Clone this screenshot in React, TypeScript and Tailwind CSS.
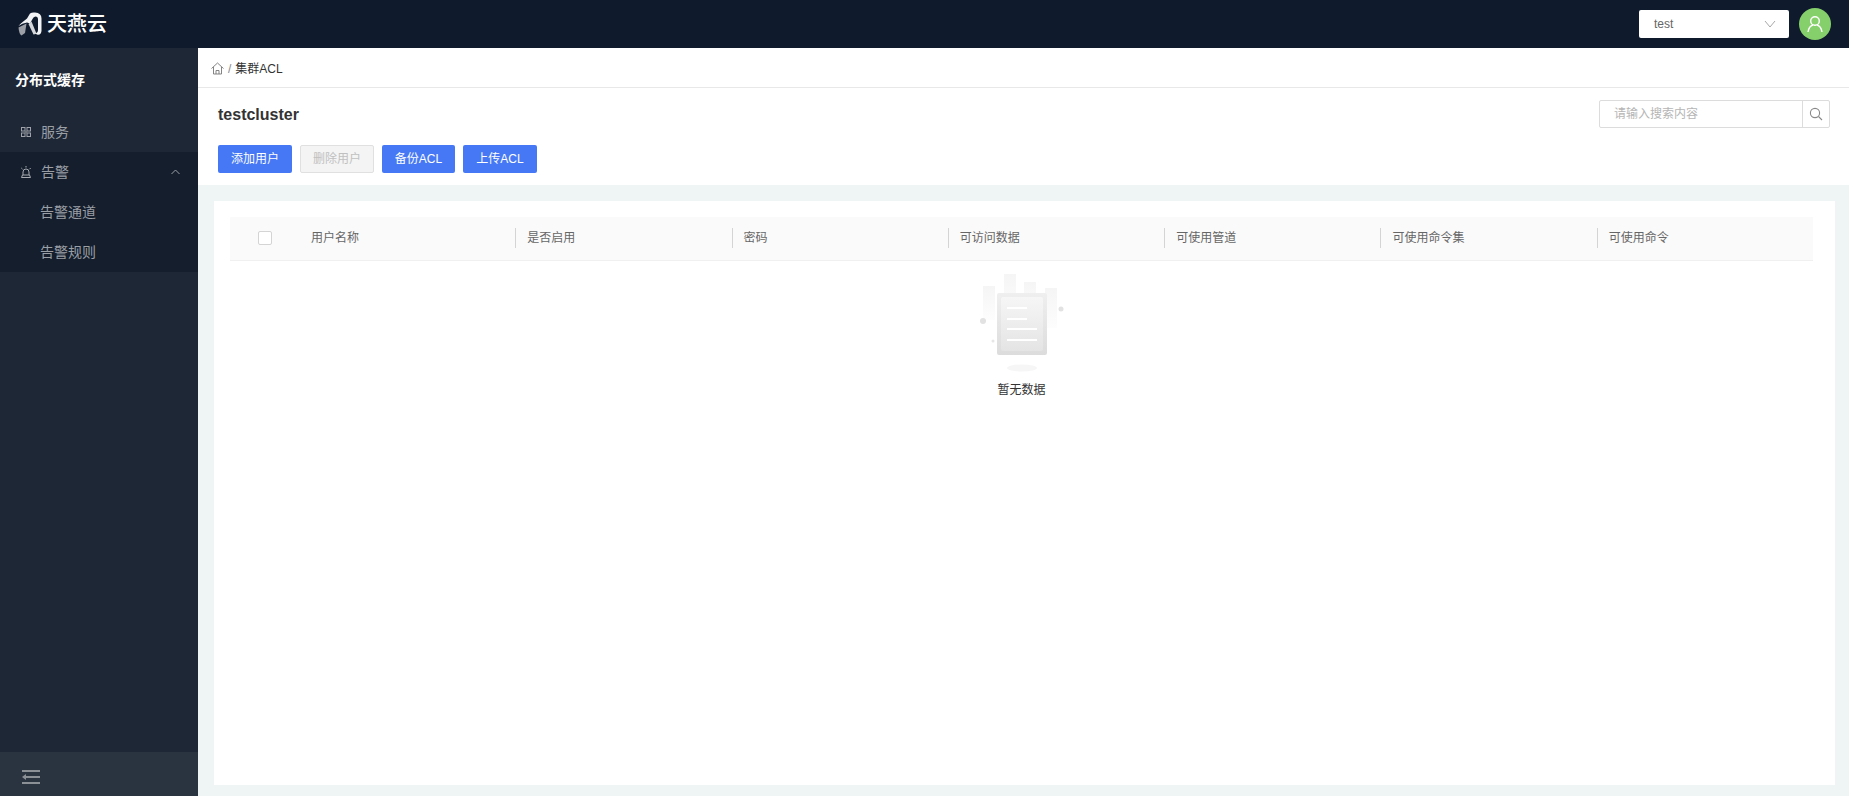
import React from "react";

const F = "font-['Liberation_Sans','Noto_Sans_CJK_SC',sans-serif]";

function Logo() {
  return (
    <div className="flex items-center gap-[5px]">
      <svg width="24" height="24" viewBox="0 0 24 24">
        <path d="M0.5 14 C3 10.5 7 8.5 9 6.5 L12 1.5 Q14 0 17 0.5 Q23.5 1 23.5 6.5 L23.5 19 Q23 23.5 19 22.5 L17 21.5 Q20 20.5 20 18 L20 7.5 Q20 4.5 17.5 4.5 Q15.5 4.5 14.5 7 L12 11.5 L9 10.5 Q4 11 0.5 14 Z" fill="#f2f3f4" />
        <path d="M0.5 15.5 L8.5 11.5 L7 21 L3.5 23.5 Q1 22 0.5 15.5 Z" fill="#9ca0a6" />
        <path d="M10.5 12 L13.5 9.5 L18.5 21.8 L15.5 22.5 Z" fill="#d4d6d9" />
      </svg>
      <span className="text-[20px] font-medium leading-none text-white">天燕云</span>
    </div>
  );
}

function ColHead({ label, divider }: { label: string; divider?: boolean }) {
  return (
    <div className="relative flex h-full flex-1 items-center pl-[12px]">
      {divider && <span className="absolute left-0 top-[11px] h-[20px] w-px bg-[#d4d4d4]" />}
      <span>{label}</span>
    </div>
  );
}

export default function App() {
  return (
    <div className={`${F} flex h-[796px] w-[1849px] flex-col overflow-hidden bg-[#eff4f5]`}>
      <header className="flex h-[48px] shrink-0 items-center justify-between bg-[#0f1b2d] pl-[18px] pr-[18px]">
        <Logo />
        <div className="flex items-center gap-[10px]">
          <div className="flex h-[28px] w-[150px] items-center justify-between rounded-[2px] bg-white pl-[15px] pr-[13px] text-[12px] text-[#666]">
            <span>test</span>
            <svg width="12" height="8" viewBox="0 0 12 8" fill="none" stroke="#a8a8a8" strokeWidth="1">
              <path d="M1 1 L6 7 L11 1" />
            </svg>
          </div>
          <div className="flex h-[32px] w-[32px] items-center justify-center rounded-full bg-[#85d06a]">
            <svg width="18" height="18" viewBox="0 0 18 18" fill="none" stroke="#fff" strokeWidth="1.4">
              <circle cx="9" cy="6" r="4.3" />
              <path d="M2 17 Q3 11 7 10 M16 17 Q15 11 11 10" />
            </svg>
          </div>
        </div>
      </header>

      <div className="flex min-h-0 flex-1">
        <aside className="flex w-[198px] shrink-0 flex-col bg-[#1e2736]">
          <div className="flex h-[64px] items-center pl-[15px] text-[14px] font-bold text-white">分布式缓存</div>
          <div className="flex h-[40px] items-center pl-[21px] text-[14px] text-[#9a9fa6]">
            <svg width="10" height="10" viewBox="0 0 10 10" fill="none" stroke="#a0a4aa" className="mr-[10px]">
              <rect x="0.5" y="0.5" width="3.5" height="3.5" />
              <rect x="6" y="0.5" width="3.5" height="3.5" />
              <rect x="0.5" y="6" width="3.5" height="3.5" />
              <rect x="6" y="6" width="3.5" height="3.5" />
              <rect x="3.5" y="3.5" width="3" height="3" fill="#6f747b" stroke="none" />
            </svg>
            <span>服务</span>
          </div>
          <div className="bg-[#141e2c] text-[14px] text-[#9a9fa6]">
            <div className="flex h-[40px] items-center justify-between pl-[21px] pr-[18px]">
              <div className="flex items-center">
                <svg width="10" height="12" viewBox="0 0 10 12" fill="none" stroke="#a8acb2" className="mr-[10px]">
                  <path d="M2 9 V6 Q2 3 5 3 Q8 3 8 6 V9" />
                  <path d="M0.5 11.5 H9.5 L8.5 9 H1.5 Z M5 0 V1.5 M0.3 2 L1.5 3.2 M9.7 2 L8.5 3.2" />
                </svg>
                <span>告警</span>
              </div>
              <svg width="9" height="6" viewBox="0 0 9 6" fill="none" stroke="#9a9fa6">
                <path d="M0.5 5 L4.5 1 L8.5 5" />
              </svg>
            </div>
            <div className="flex h-[40px] items-center pl-[40px]">告警通道</div>
            <div className="flex h-[40px] items-center pl-[40px]">告警规则</div>
          </div>
          <div className="mt-auto flex h-[44px] items-center bg-[#2a3441] pl-[22px] pt-[6px]">
            <svg width="18" height="14" viewBox="0 0 18 14" fill="#8b8f96">
              <rect x="0" y="0" width="18" height="2" />
              <rect x="4" y="6" width="14" height="2" />
              <rect x="0" y="12" width="18" height="2" />
              <path d="M0 7 L4 4 V10 Z" />
            </svg>
          </div>
        </aside>

        <main className="flex min-w-0 flex-1 flex-col">
          <div className="flex h-[40px] items-center border-b border-[#e8e8e8] bg-white pl-[13px] pt-[2px] text-[12px] text-[#333]">
            <svg width="13" height="13" viewBox="0 0 13 13" fill="none" stroke="#777" strokeWidth="0.9">
              <path d="M0.5 6.5 L6.5 1 L12.5 6.5 M2.5 5 V12 H10.5 V5 M5 12 V8.5 H8 V12" />
            </svg>
            <span className="mx-[4px] text-[#888]">/</span>
            <span>集群ACL</span>
          </div>

          <div className="h-[97px] bg-white pl-[20px] pr-[19px]">
            <div className="flex h-[57px] items-start justify-between pt-[12px]">
              <h1 className="mt-[3px] text-[16px] font-bold leading-[24px] text-[#333]">testcluster</h1>
              <div className="flex h-[28px] w-[231px] rounded-[2px] border border-[#dcdcdc] text-[12px]">
                <div className="flex flex-1 items-center pl-[14px] text-[#b5b5b5]">请输入搜索内容</div>
                <div className="flex w-[27px] items-center justify-center border-l border-[#dcdcdc]">
                  <svg width="14" height="14" viewBox="0 0 14 14" fill="none" stroke="#888" strokeWidth="1.1">
                    <circle cx="6" cy="6" r="4.6" />
                    <path d="M9.5 9.5 L13 13" />
                  </svg>
                </div>
              </div>
            </div>
            <div className="flex gap-[8px] text-[12px]">
              <button className="h-[28px] w-[74px] rounded-[2px] bg-[#4678f5] text-white">添加用户</button>
              <button className="h-[28px] w-[74px] rounded-[2px] border border-[#e0e0e0] bg-[#f4f4f4] text-[#c0c0c0]">删除用户</button>
              <button className="h-[28px] w-[73px] rounded-[2px] bg-[#4678f5] text-white">备份ACL</button>
              <button className="h-[28px] w-[74px] rounded-[2px] bg-[#4678f5] text-white">上传ACL</button>
            </div>
          </div>

          <div className="min-h-0 flex-1 pb-[11px] pl-[16px] pr-[14px] pt-[16px]">
            <div className="h-full bg-white pl-[16px] pr-[22px] pt-[16px]">
              <div className="flex h-[44px] items-center border-b border-[#f0f0f0] bg-[#fafafa] pb-[2px] text-[12px] text-[#666]">
                <div className="flex w-[69px] shrink-0 items-center pl-[28px]">
                  <span className="h-[14px] w-[14px] rounded-[2px] border border-[#d4d4d4] bg-white" />
                </div>
                <ColHead label="用户名称" />
                <ColHead label="是否启用" divider />
                <ColHead label="密码" divider />
                <ColHead label="可访问数据" divider />
                <ColHead label="可使用管道" divider />
                <ColHead label="可使用命令集" divider />
                <ColHead label="可使用命令" divider />
              </div>
              <div className="flex flex-col items-center pt-[12px]">
                <svg width="90" height="100" viewBox="1 1 90 100">
                  <defs>
                    <linearGradient id="b" x1="0" y1="0" x2="0" y2="1">
                      <stop offset="0" stopColor="#f5f5f5" />
                      <stop offset="1" stopColor="#fdfdfd" />
                    </linearGradient>
                    <linearGradient id="d" x1="0" y1="0" x2="0" y2="1">
                      <stop offset="0" stopColor="#efefef" />
                      <stop offset="1" stopColor="#dcdcdc" />
                    </linearGradient>
                    <linearGradient id="p" x1="0" y1="0" x2="0" y2="1">
                      <stop offset="0" stopColor="#f6f6f6" />
                      <stop offset="1" stopColor="#e4e4e4" />
                    </linearGradient>
                  </defs>
                  <rect x="7" y="14" width="12" height="34" fill="url(#b)" />
                  <rect x="28" y="2" width="12" height="40" fill="url(#b)" />
                  <rect x="48" y="10" width="12" height="30" fill="url(#b)" />
                  <rect x="69" y="16" width="12" height="40" fill="url(#b)" />
                  <rect x="21" y="21" width="50" height="62" rx="2" fill="url(#d)" />
                  <rect x="25" y="25" width="42" height="54" rx="2" fill="url(#p)" />
                  <g fill="#fff">
                    <rect x="31" y="35" width="20" height="2" />
                    <rect x="31" y="46" width="20" height="2" />
                    <rect x="31" y="56" width="30" height="2" />
                    <rect x="31" y="67" width="30" height="2" />
                  </g>
                  <circle cx="7" cy="49" r="3" fill="#e2e2e2" />
                  <circle cx="85" cy="37" r="2.5" fill="#e2e2e2" />
                  <circle cx="17" cy="69" r="1.5" fill="#e6e6e6" />
                  <ellipse cx="46" cy="96" rx="15" ry="3.5" fill="#f6f6f6" />
                </svg>
                <div className="mt-[8px] text-[12px] text-[#333]">暂无数据</div>
              </div>
            </div>
          </div>
        </main>
      </div>
    </div>
  );
}
